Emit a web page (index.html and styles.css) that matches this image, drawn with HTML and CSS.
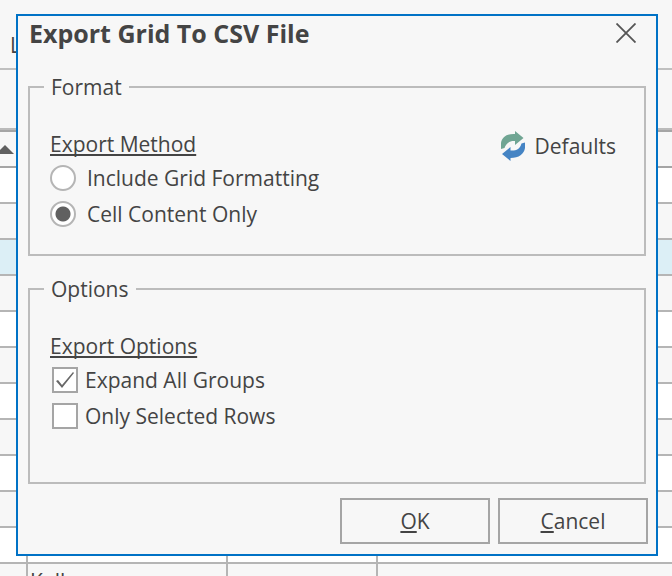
FILE: index.html
```html
<!DOCTYPE html>
<html lang="en">
<head>
    <meta charset="UTF-8">
    <meta name="viewport" content="width=device-width, initial-scale=1.0">
    <title>Export Grid To CSV File</title>
    <link rel="stylesheet" href="styles.css">
</head>
<body>
    <div class="page">
        <div class="toolbar">L</div>
        <div class="group-panel"></div>
        <table class="grid">
            <thead>
                <tr>
                    <th class="col-mark"><svg class="sort" viewBox="0 0 18 9" width="18" height="9"><path d="M9 0L18 9H0z" fill="#606060"/></svg></th>
                    <th class="col-name"></th>
                    <th class="col-type"></th>
                    <th></th>
                </tr>
            </thead>
            <tbody>
                <tr><td></td><td></td><td></td><td></td></tr>
                <tr><td></td><td></td><td></td><td></td></tr>
                <tr class="selected"><td></td><td></td><td></td><td></td></tr>
                <tr><td></td><td></td><td></td><td></td></tr>
                <tr><td></td><td></td><td></td><td></td></tr>
                <tr><td></td><td></td><td></td><td></td></tr>
                <tr><td></td><td></td><td></td><td></td></tr>
                <tr><td></td><td></td><td></td><td></td></tr>
                <tr><td></td><td></td><td></td><td></td></tr>
                <tr><td></td><td></td><td></td><td></td></tr>
                <tr><td></td><td></td><td></td><td></td></tr>
                <tr><td></td><td>Kelly</td><td></td><td></td></tr>
            </tbody>
        </table>

        <form class="dialog" role="dialog" aria-labelledby="dialogTitle">
            <div class="title-bar">
                <h1 id="dialogTitle">Export Grid To CSV File</h1>
                <button type="button" class="close" aria-label="Close">
                    <svg viewBox="0 0 20 20" width="20" height="20"><path d="M0.5 0.5L19.5 19.5M19.5 0.5L0.5 19.5" stroke="#555" stroke-width="1.8"/></svg>
                </button>
            </div>

            <fieldset>
                <legend>Format</legend>
                <div class="heading">
                    <h2>Export Method</h2>
                    <button type="button" class="defaults">
                        <svg viewBox="0 0 24 30" width="24" height="30">
                            <path d="M0 18V12C1 6 6 2.500 14 3V0L22.500 7L14 14V10C9 9.500 5 12 3.500 17z" fill="#70a593"/>
                            <path d="M24 11.500V17C23 23 18 27 9.500 27V30L1 23L9.500 16V19.500C15 20 19 18 20.500 12.500z" fill="#4584c4"/>
                        </svg>
                        Defaults
                    </button>
                </div>
                <label class="option"><input type="radio" name="method"> Include Grid Formatting</label>
                <label class="option"><input type="radio" name="method" checked> Cell Content Only</label>
            </fieldset>

            <fieldset class="options">
                <legend>Options</legend>
                <div class="heading">
                    <h2>Export Options</h2>
                </div>
                <label class="option check"><input type="checkbox" checked> Expand All Groups</label>
                <label class="option check"><input type="checkbox"> Only Selected Rows</label>
            </fieldset>

            <div class="buttons">
                <button type="submit"><u>O</u>K</button>
                <button type="button"><u>C</u>ancel</button>
            </div>
        </form>
    </div>
</body>
</html>
```
FILE: styles.css
```css
* {
    box-sizing: border-box;
}

body {
    margin: 0;
    background-color: #f7f7f7;
    color: #444;
    font-family: Tahoma, "Open Sans", sans-serif;
    font-size: 21px;
    line-height: 26px;
}

.page {
    position: relative;
    height: 100vh;
    overflow: hidden;
}

.toolbar {
    height: 70px;
    padding: 32px 10px 0;
    border-bottom: 2px solid #c0c0c0;
}

.group-panel {
    height: 60px;
    border-bottom: 2px solid #bbb;
}

/* data grid behind the dialog */
.grid {
    width: 100%;
    table-layout: fixed;
    border-collapse: separate;
    border-spacing: 0;
    border-top: 2px solid #a5a5a5;
}

.grid th, .grid td {
    height: 36px;
    padding: 0 2px;
    border-right: 2px solid #b5b5b5;
    border-bottom: 2px solid #b5b5b5;
    line-height: 28px;
    text-align: left;
}

.grid th {
    border-bottom-color: #a5a5a5;
}

.grid th:last-child, .grid td:last-child {
    border-right: none;
}

.grid tbody tr:nth-child(odd) {
    background-color: #fff;
}

.grid tbody tr.selected {
    background-color: #dceff6;
}

.col-mark {
    width: 28px;
}

.col-name {
    width: 200px;
}

.col-type {
    width: 150px;
}

.sort {
    display: block;
    margin-left: -6px;
}

/* dialog */
.dialog {
    position: absolute;
    top: 14px;
    left: 16px;
    right: 14px;
    padding: 0 10px 10px;
    border: 2px solid #0072c6;
    background-color: #f7f7f7;
}

.title-bar {
    display: flex;
    justify-content: space-between;
    align-items: center;
    height: 34px;
    margin-bottom: 24px;
    padding: 0 10px 0 1px;
}

h1 {
    margin: 0;
    font-size: 25px;
    line-height: 26px;
}

button {
    padding: 0;
    border: none;
    background: none;
    color: inherit;
    font: inherit;
}

.close {
    display: flex;
}

fieldset {
    margin: 0 0 20px;
    padding: 30px 28px 22px 20px;
    border: 2px solid #bcbcbc;
}

.options {
    margin-bottom: 14px;
    padding-bottom: 48px;
}

legend {
    margin-left: -6px;
    padding: 0 7px;
}

.heading {
    display: flex;
    justify-content: space-between;
    align-items: center;
    height: 28px;
    margin-bottom: 2px;
}

h2 {
    margin: 0;
    font-size: 21px;
    font-weight: normal;
    text-decoration: underline;
    text-decoration-thickness: 2px;
    text-decoration-skip-ink: none;
    text-underline-offset: 2px;
}

.defaults {
    display: flex;
    align-items: center;
    gap: 10px;
    padding-top: 3px;
}

.option {
    display: flex;
    align-items: center;
    gap: 11px;
    height: 36px;
}

.option input {
    appearance: none;
    width: 26px;
    height: 26px;
    margin: 0;
    border: 2px solid #b5b5b5;
    border-radius: 50%;
    background-color: #fff;
}

.option input[type="radio"]:checked {
    background-image: radial-gradient(circle, #606060 7px, #fff 8px);
}

.check {
    gap: 7px;
    padding-left: 2px;
}

.check input {
    display: grid;
    place-items: center;
    border-color: #a5a5a5;
    border-radius: 0;
}

.check input:checked::before {
    content: "";
    width: 18px;
    height: 16px;
    background-color: #686868;
    clip-path: polygon(0 9px, 2px 8px, 6px 13px, 17px 0, 18px 1px, 6px 16px);
}

.buttons {
    display: flex;
    justify-content: flex-end;
    gap: 8px;
    margin-right: -2px;
}

.buttons button {
    width: 150px;
    height: 46px;
    border: 2px solid #a5a5a5;
}

.buttons u {
    text-decoration-thickness: 2px;
    text-underline-offset: 2px;
}
```
